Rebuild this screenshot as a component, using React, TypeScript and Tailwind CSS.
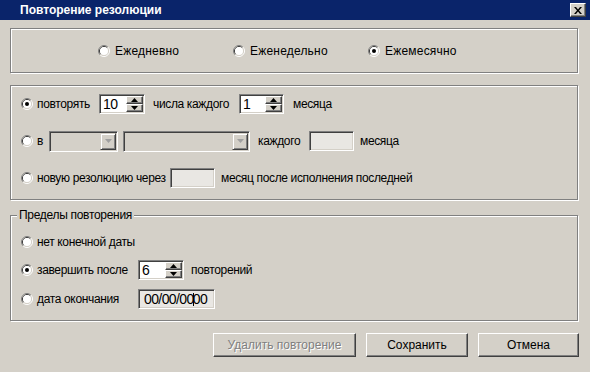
import React from "react";

const font = { fontFamily: '"Liberation Sans", Arial, sans-serif' };

const Radio = ({ checked = false }: { checked?: boolean }) => (
  <svg width="12" height="12" viewBox="0 0 12 12" className="shrink-0">
    <path d="M2.11 9.89A5.5 5.5 0 0 1 9.89 2.11" stroke="#808080" fill="none" />
    <path d="M9.89 2.11A5.5 5.5 0 0 1 2.11 9.89" stroke="#ffffff" fill="none" />
    <path d="M2.82 9.18A4.5 4.5 0 0 1 9.18 2.82" stroke="#404040" fill="none" />
    <path d="M9.18 2.82A4.5 4.5 0 0 1 2.82 9.18" stroke="#d4d0c8" fill="none" />
    <circle cx="6" cy="6" r="4" fill="#ffffff" />
    {checked && <circle cx="6" cy="6" r="2" fill="#000000" />}
  </svg>
);

const SpinBtn = ({ up }: { up?: boolean }) => (
  <div className="flex h-[8px] w-[17px] items-center justify-center border border-t-white border-l-white border-r-[#404040] border-b-[#404040] bg-[#d4d0c8] shadow-[inset_-1px_-1px_0_#808080]">
    <svg width="7" height="4" viewBox="0 0 7 4">
      {up ? <path d="M0 4 L3.5 0 L7 4 Z" fill="#000" /> : <path d="M0 0 L7 0 L3.5 4 Z" fill="#000" />}
    </svg>
  </div>
);

const Spinner = ({ value, w }: { value: string; w: string }) => (
  <div
    className={`flex h-[20px] ${w} shrink-0 border border-t-[#808080] border-l-[#808080] border-b-white border-r-white bg-white shadow-[inset_1px_1px_0_#404040,inset_-1px_-1px_0_#d4d0c8] p-[1px]`}
  >
    <div className="flex flex-1 items-center pl-[2px] text-[14px] leading-none tracking-[-0.6px] text-black">{value}</div>
    <div className="flex flex-col">
      <SpinBtn up />
      <SpinBtn />
    </div>
  </div>
);

const Select = ({ w }: { w: string }) => (
  <div
    className={`flex h-[21px] ${w} shrink-0 border border-t-[#808080] border-l-[#808080] border-b-white border-r-white bg-[#d4d0c8] shadow-[inset_1px_1px_0_#404040,inset_-1px_-1px_0_#d4d0c8] p-[1px]`}
  >
    <div className="flex-1" />
    <div className="flex w-[16px] items-center justify-center border border-t-[#d4d0c8] border-l-[#d4d0c8] border-r-[#404040] border-b-[#404040] shadow-[inset_1px_1px_0_#fff,inset_-1px_-1px_0_#808080]">
      <svg width="7" height="4" viewBox="0 0 7 4">
        <path d="M0 0 L7 0 L3.5 4 Z" fill="#a0a0a0" />
      </svg>
    </div>
  </div>
);

const Field = ({ w, children }: { w: string; children?: React.ReactNode }) => (
  <div
    className={`flex h-[20px] ${w} shrink-0 items-center whitespace-nowrap border border-t-[#808080] border-l-[#808080] border-b-white border-r-white bg-[#e9e7e3] shadow-[inset_1px_1px_0_#404040,inset_-1px_-1px_0_#d4d0c8] pl-[5px] text-[14px] leading-none tracking-[-0.6px] text-black`}
  >
    {children}
  </div>
);

const Etched = "border border-[#808080] shadow-[inset_1px_1px_0_#fff,1px_1px_0_#fff]";

const Button = ({ children, w, disabled }: { children: React.ReactNode; w: string; disabled?: boolean }) => (
  <div
    className={`flex h-[24px] ${w} items-center justify-center whitespace-nowrap border border-t-white border-l-white border-r-[#404040] border-b-[#404040] bg-[#d4d0c8] shadow-[inset_-1px_-1px_0_#808080] text-[12px] leading-none ${
      disabled ? "text-[#808080] [text-shadow:1px_1px_0_#fff]" : "text-black"
    }`}
  >
    {children}
  </div>
);

const T = ({ className = "", children }: { className?: string; children: React.ReactNode }) => (
  <span className={`shrink-0 whitespace-nowrap leading-none tracking-[-0.35px] ${className}`}>{children}</span>
);

export default function App() {
  return (
    <div className="relative h-[372px] w-[590px] overflow-hidden bg-[#d4d0c8] text-[12px] text-black" style={font}>
      {/* title bar */}
      <div className="flex h-[20px] items-center justify-between bg-[#0a246a] pl-[20px] pr-[4px]">
        <span className="text-[12px] font-bold leading-none text-white">Повторение резолюции</span>
        <div className="flex h-[14px] w-[16px] items-center justify-center border border-t-white border-l-white border-r-[#404040] border-b-[#404040] bg-[#d4d0c8] shadow-[inset_-1px_-1px_0_#808080]">
          <svg width="8" height="7" viewBox="0 0 8 7">
            <path d="M0 0 L2 0 L4 2.5 L6 0 L8 0 L5 3.5 L8 7 L6 7 L4 4.5 L2 7 L0 7 L3 3.5 Z" fill="#000" />
          </svg>
        </div>
      </div>

      <div className="flex flex-col pl-[10px] pr-[12px] pt-[8px]">
        {/* group 1 */}
        <div className={`${Etched} flex h-[45px] items-center pl-[87px]`}>
          <div className="flex w-[135px] items-center gap-[5px]">
            <Radio />
            <T className="tracking-[0.2px]">Ежедневно</T>
          </div>
          <div className="flex w-[135px] items-center gap-[5px]">
            <Radio />
            <T className="tracking-[0.2px]">Еженедельно</T>
          </div>
          <div className="flex items-center gap-[5px]">
            <Radio checked />
            <T className="tracking-[0.2px]">Ежемесячно</T>
          </div>
        </div>

        {/* group 2 */}
        <div className={`${Etched} mt-[12px] flex flex-col gap-[15px] pb-[10px] pl-[10px] pt-[7px]`}>
          <div className="flex h-[22px] items-center">
            <Radio checked />
            <T className="ml-[4px] w-[62px]">повторять</T>
            <Spinner value="10" w="w-[46px]" />
            <T className="ml-[8px] w-[86px]">числа каждого</T>
            <Spinner value="1" w="w-[45px]" />
            <T className="ml-[9px]">месяца</T>
          </div>
          <div className="flex h-[22px] items-center">
            <Radio />
            <T className="ml-[4px] w-[12px]">в</T>
            <Select w="w-[69px]" />
            <div className="w-[5px] shrink-0" />
            <Select w="w-[127px]" />
            <T className="ml-[8px] w-[51px]">каждого</T>
            <Field w="w-[45px]" />
            <T className="ml-[6px]">месяца</T>
          </div>
          <div className="flex h-[22px] items-center">
            <Radio />
            <T className="ml-[4px] w-[133px]">новую резолюцию через</T>
            <Field w="w-[45px]" />
            <T className="ml-[6px]">месяц после исполнения последней</T>
          </div>
        </div>

        {/* group 3 */}
        <div className={`${Etched} relative mt-[15px] flex flex-col pb-[10px] pl-[10px] pt-[15px]`}>
          <span className="absolute -top-[7px] left-[6px] whitespace-nowrap bg-[#d4d0c8] px-[2px] leading-[13px] tracking-[-0.3px]">
            Пределы повторения
          </span>
          <div className="flex h-[22px] items-center">
            <Radio />
            <T className="ml-[4px]">нет конечной даты</T>
          </div>
          <div className="mt-[6px] flex h-[22px] items-center">
            <Radio checked />
            <T className="ml-[4px] w-[101px]">завершить после</T>
            <Spinner value="6" w="w-[46px]" />
            <T className="ml-[7px]">повторений</T>
          </div>
          <div className="mt-[7px] flex h-[22px] items-center">
            <Radio />
            <T className="ml-[4px] w-[101px]">дата окончания</T>
            <Field w="w-[77px]">
              00/00/00
              <span className="mx-[-1px] inline-block h-[13px] w-[1px] bg-black" />
              00
            </Field>
          </div>
        </div>

        {/* buttons */}
        <div className="mr-[-1px] mt-[12px] flex justify-end gap-[10px]">
          <Button w="w-[143px]" disabled>
            Удалить повторение
          </Button>
          <Button w="w-[102px]">Сохранить</Button>
          <Button w="w-[101px]">Отмена</Button>
        </div>
      </div>
    </div>
  );
}
